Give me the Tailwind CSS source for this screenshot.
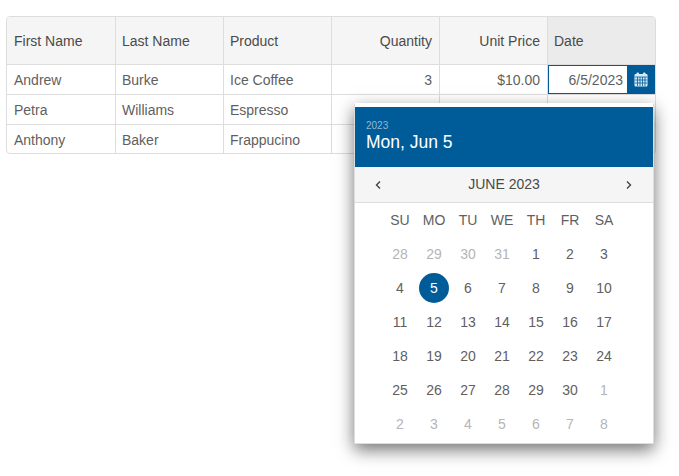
<!DOCTYPE html>
<html lang="en">
<head>
    <meta charset="UTF-8">
    <title>Grid date editor</title>
    <script src="https://cdn.jsdelivr.net/npm/@tailwindcss/browser@4"></script>
</head>
<body class="bg-white font-['Liberation_Sans',Arial,sans-serif] text-[14px] text-[#5f5f5f]">
    <div class="relative h-[476px] w-[679px] overflow-hidden pt-[16px] pl-[6px]">
        <div class="w-[650px] overflow-hidden rounded-[4px] border border-[#ddd]">
            <div class="grid h-[47px] grid-cols-[109px_108px_108px_108px_108px_1fr] items-center bg-[#f5f5f5] text-[#4a4a4a]">
                <div class="flex h-full items-center border-r border-[#ddd] px-[7px] pt-[2px]">First Name</div>
                <div class="flex h-full items-center border-r border-[#ddd] px-[6px] pt-[2px]">Last Name</div>
                <div class="flex h-full items-center border-r border-[#ddd] px-[6px] pt-[2px]">Product</div>
                <div class="flex h-full items-center justify-end border-r border-[#ddd] px-[7px] pt-[2px]">Quantity</div>
                <div class="flex h-full items-center justify-end border-r border-[#ddd] px-[7px] pt-[2px]">Unit Price</div>
                <div class="flex h-full items-center bg-[#ebebeb] px-[6px] pt-[2px]">Date</div>
            </div>
            <div class="grid h-[30px] grid-cols-[109px_108px_108px_108px_108px_1fr] items-center border-t border-[#ddd]">
                <div class="flex h-full items-center border-r border-[#ddd] px-[7px] pt-[2px]">Andrew</div>
                <div class="flex h-full items-center border-r border-[#ddd] px-[6px] pt-[2px]">Burke</div>
                <div class="flex h-full items-center border-r border-[#ddd] px-[6px] pt-[2px]">Ice Coffee</div>
                <div class="flex h-full items-center justify-end border-r border-[#ddd] px-[7px] pt-[2px]">3</div>
                <div class="flex h-full items-center justify-end border-r border-[#ddd] px-[7px] pt-[2px]">$10.00</div>
                <div class="flex h-full border border-[#005c99] bg-[#005c99]">
                    <div class="flex w-[78px] items-center justify-end bg-white pt-[2px] pr-[4px]">6/5/2023</div>
                    <div class="flex flex-1 items-center justify-center">
                        <svg width="14" height="15" viewBox="0 0 14 15" fill="none">
                            <rect x="0.5" y="2" width="13" height="12.5" rx="1" fill="#d5ebf8"/>
                            <rect x="2.5" y="0.5" width="2.5" height="3.5" rx="1" fill="#d5ebf8"/>
                            <rect x="9" y="0.5" width="2.5" height="3.5" rx="1" fill="#d5ebf8"/>
                            <path d="M1 5h12M1 8h12M1 11h12M3.5 5v9M6 5v9M8.5 5v9M11 5v9" stroke="#005c99" stroke-width="0.8"/>
                        </svg>
                    </div>
                </div>
            </div>
            <div class="grid h-[30px] grid-cols-[109px_108px_108px_108px_108px_1fr] items-center border-t border-[#ddd]">
                <div class="flex h-full items-center border-r border-[#ddd] px-[7px] pt-[2px]">Petra</div>
                <div class="flex h-full items-center border-r border-[#ddd] px-[6px] pt-[2px]">Williams</div>
                <div class="flex h-full items-center border-r border-[#ddd] px-[6px] pt-[2px]">Espresso</div>
                <div class="h-full border-r border-[#ddd]"></div>
                <div class="h-full border-r border-[#ddd]"></div>
                <div></div>
            </div>
            <div class="grid h-[29px] grid-cols-[109px_108px_108px_108px_108px_1fr] items-center border-t border-[#ddd]">
                <div class="flex h-full items-center border-r border-[#ddd] px-[7px] pt-[2px]">Anthony</div>
                <div class="flex h-full items-center border-r border-[#ddd] px-[6px] pt-[2px]">Baker</div>
                <div class="flex h-full items-center border-r border-[#ddd] px-[6px] pt-[2px]">Frappucino</div>
                <div class="h-full border-r border-[#ddd]"></div>
                <div class="h-full border-r border-[#ddd]"></div>
                <div></div>
            </div>
        </div>

        <div class="absolute top-[103px] left-[354px] w-[300px] border border-[#ddd] border-t-white bg-white pt-[3px] pb-[2px] shadow-[0_6px_16px_rgba(0,0,0,0.55)]">
            <div class="flex h-[60px] flex-col bg-[#005c99] pt-[13px] pl-[11px] text-white">
                <div class="text-[10px] leading-[11px] text-[#8fb8d6]">2023</div>
                <div class="text-[17.5px] leading-[22px]">Mon, Jun 5</div>
            </div>
            <div class="flex h-[36px] items-center justify-between border-b border-[#ddd] bg-[#f5f5f5] pr-[21px] pl-[20px] text-[#4a4a4a]">
                <svg width="7" height="10" viewBox="0 0 7 10" fill="none"><path d="M5 1.5L1.5 5 5 8.5" stroke="#444" stroke-width="1.4"/></svg>
                <div class="pl-[1px]">JUNE 2023</div>
                <svg width="7" height="10" viewBox="0 0 7 10" fill="none"><path d="M2 1.5L5.5 5 2 8.5" stroke="#444" stroke-width="1.4"/></svg>
            </div>
            <div class="grid grid-cols-[repeat(7,34px)] pl-[28px] text-center">
                <div class="flex h-[34px] items-center justify-center">SU</div>
                <div class="flex h-[34px] items-center justify-center">MO</div>
                <div class="flex h-[34px] items-center justify-center">TU</div>
                <div class="flex h-[34px] items-center justify-center">WE</div>
                <div class="flex h-[34px] items-center justify-center">TH</div>
                <div class="flex h-[34px] items-center justify-center">FR</div>
                <div class="flex h-[34px] items-center justify-center">SA</div>

                <div class="flex h-[34px] items-center justify-center text-[#b5b5b5]">28</div>
                <div class="flex h-[34px] items-center justify-center text-[#b5b5b5]">29</div>
                <div class="flex h-[34px] items-center justify-center text-[#b5b5b5]">30</div>
                <div class="flex h-[34px] items-center justify-center text-[#b5b5b5]">31</div>
                <div class="flex h-[34px] items-center justify-center">1</div>
                <div class="flex h-[34px] items-center justify-center">2</div>
                <div class="flex h-[34px] items-center justify-center">3</div>

                <div class="flex h-[34px] items-center justify-center">4</div>
                <div class="flex h-[34px] items-center justify-center"><span class="flex h-[30px] w-[30px] items-center justify-center rounded-full bg-[#005c99] text-white">5</span></div>
                <div class="flex h-[34px] items-center justify-center">6</div>
                <div class="flex h-[34px] items-center justify-center">7</div>
                <div class="flex h-[34px] items-center justify-center">8</div>
                <div class="flex h-[34px] items-center justify-center">9</div>
                <div class="flex h-[34px] items-center justify-center">10</div>

                <div class="flex h-[34px] items-center justify-center">11</div>
                <div class="flex h-[34px] items-center justify-center">12</div>
                <div class="flex h-[34px] items-center justify-center">13</div>
                <div class="flex h-[34px] items-center justify-center">14</div>
                <div class="flex h-[34px] items-center justify-center">15</div>
                <div class="flex h-[34px] items-center justify-center">16</div>
                <div class="flex h-[34px] items-center justify-center">17</div>

                <div class="flex h-[34px] items-center justify-center">18</div>
                <div class="flex h-[34px] items-center justify-center">19</div>
                <div class="flex h-[34px] items-center justify-center">20</div>
                <div class="flex h-[34px] items-center justify-center">21</div>
                <div class="flex h-[34px] items-center justify-center">22</div>
                <div class="flex h-[34px] items-center justify-center">23</div>
                <div class="flex h-[34px] items-center justify-center">24</div>

                <div class="flex h-[34px] items-center justify-center">25</div>
                <div class="flex h-[34px] items-center justify-center">26</div>
                <div class="flex h-[34px] items-center justify-center">27</div>
                <div class="flex h-[34px] items-center justify-center">28</div>
                <div class="flex h-[34px] items-center justify-center">29</div>
                <div class="flex h-[34px] items-center justify-center">30</div>
                <div class="flex h-[34px] items-center justify-center text-[#b5b5b5]">1</div>

                <div class="flex h-[34px] items-center justify-center text-[#b5b5b5]">2</div>
                <div class="flex h-[34px] items-center justify-center text-[#b5b5b5]">3</div>
                <div class="flex h-[34px] items-center justify-center text-[#b5b5b5]">4</div>
                <div class="flex h-[34px] items-center justify-center text-[#b5b5b5]">5</div>
                <div class="flex h-[34px] items-center justify-center text-[#b5b5b5]">6</div>
                <div class="flex h-[34px] items-center justify-center text-[#b5b5b5]">7</div>
                <div class="flex h-[34px] items-center justify-center text-[#b5b5b5]">8</div>
            </div>
        </div>
    </div>
</body>
</html>
